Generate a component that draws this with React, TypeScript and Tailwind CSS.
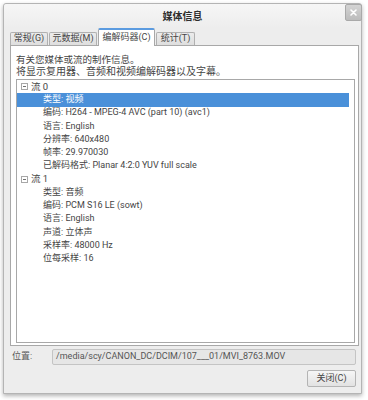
import React from "react";

const font = { fontFamily: '"Roboto","Noto Sans CJK SC",sans-serif' };

function Expander() {
  return (
    <div className="w-[7px] h-[7px] border border-[#a8a8a8] bg-white flex items-center justify-center">
      <div className="w-[3px] h-[1px] bg-[#707070]" />
    </div>
  );
}

function StreamRow({ label }: { label: string }) {
  return (
    <div className="h-[13.25px] flex items-center pl-[4px] mr-[5px] text-[9.5px]">
      <Expander />
      <span className="ml-[3px]">{label}</span>
    </div>
  );
}

function Row({ text, selected }: { text: string; selected?: boolean }) {
  return (
    <div
      className={
        "h-[13.25px] flex items-center pl-[26px] mr-[5px] whitespace-nowrap " +
        (selected ? "bg-[#4a90d9] text-white" : "")
      }
    >
      {text}
    </div>
  );
}

export default function App() {
  const tabs = [
    { label: "常规(G)", w: "w-[38px]" },
    { label: "元数据(M)", w: "w-[48px]" },
    { label: "编解码器(C)", w: "w-[57px]", sel: true },
    { label: "统计(T)", w: "w-[39px]" },
  ];
  return (
    <div className="w-[368px] h-[400px] bg-white pt-[3px] pl-[3px] text-[#454545]" style={font}>
      <div className="relative w-[359px] h-[391px] bg-[#ededed] border border-[#b4b4b4] rounded-t-[3px] shadow-[0_2px_4px_rgba(0,0,0,0.3)] flex flex-col">
        <div className="h-[24px] flex items-center justify-center text-[10px] font-bold text-[#2e2e2e] bg-gradient-to-b from-[#f6f6f6] to-[#ededed] rounded-t-[3px]">
          媒体信息
        </div>
        <div className="absolute right-[-1px] top-[0px] w-[17px] h-[17px] rounded-[2px] border border-[#a9a9a9] bg-gradient-to-b from-[#d4d4d4] to-[#bcbcbc] flex items-center justify-center">
          <svg width="7" height="7" viewBox="0 0 7 7">
            <path d="M1 1L6 6M6 1L1 6" stroke="white" strokeWidth="1.6" strokeLinecap="round" />
          </svg>
        </div>
        <div className="h-[17px] flex items-end pl-[6px] gap-[1px] text-[9px]">
          {tabs.map((t) =>
            t.sel ? (
              <div
                key={t.label}
                className={t.w + " h-[18px] -mb-[1px] relative z-10 bg-white border border-[#a8a8a8] border-b-0 border-t-[#5b9be0] border-t-2 rounded-t-[2px] flex items-center justify-center"}
              >
                {t.label}
              </div>
            ) : (
              <div
                key={t.label}
                className={t.w + " h-[13px] bg-gradient-to-b from-[#ececec] to-[#dedede] border border-[#b0b0b0] border-b-0 rounded-t-[2px] flex items-center justify-center"}
              >
                {t.label}
              </div>
            )
          )}
        </div>
        <div className="ml-[6px] mr-[2px] h-[301px] bg-white border border-[#a8a8a8] flex flex-col pl-[5px] pr-[3px] pt-[8px] pb-[2px] text-[9px]">
          <div className="leading-[12px] text-[9.5px]">有关您媒体或流的制作信息。</div>
          <div className="leading-[12px] text-[10px] whitespace-nowrap">将显示复用器、音频和视频编解码器以及字幕。</div>
          <div className="mt-[1px] flex-1 border border-[#a8a8a8] bg-white">
            <StreamRow label="流 0" />
            <Row text="类型: 视频" selected />
            <Row text="编码: H264 - MPEG-4 AVC (part 10) (avc1)" />
            <Row text="语言: English" />
            <Row text="分辨率: 640x480" />
            <Row text="帧率: 29.970030" />
            <Row text="已解码格式: Planar 4:2:0 YUV full scale" />
            <StreamRow label="流 1" />
            <Row text="类型: 音频" />
            <Row text="编码: PCM S16 LE (sowt)" />
            <Row text="语言: English" />
            <Row text="声道: 立体声" />
            <Row text="采样率: 48000 Hz" />
            <Row text="位每采样: 16" />
          </div>
        </div>
        <div className="mt-[3px] h-[16px] flex items-center text-[9px]">
          <span className="ml-[8px] w-[40px] text-[#5a5a5a]">位置:</span>
          <div className="flex-1 mr-[5px] h-[16px] bg-[#e6e6e6] border border-[#c4c4c4] rounded-[2px] flex items-center pl-[3px] text-[#555] whitespace-nowrap overflow-hidden">
            /media/scy/CANON_DC/DCIM/107___01/MVI_8763.MOV
          </div>
        </div>
        <div className="mt-[5px] flex justify-end mr-[5px]">
          <div className="w-[49px] h-[17px] rounded-[2px] border border-[#b4b4b4] bg-gradient-to-b from-[#f6f6f6] to-[#e2e2e2] flex items-center justify-center text-[9px]">
            关闭(C)
          </div>
        </div>
      </div>
    </div>
  );
}
